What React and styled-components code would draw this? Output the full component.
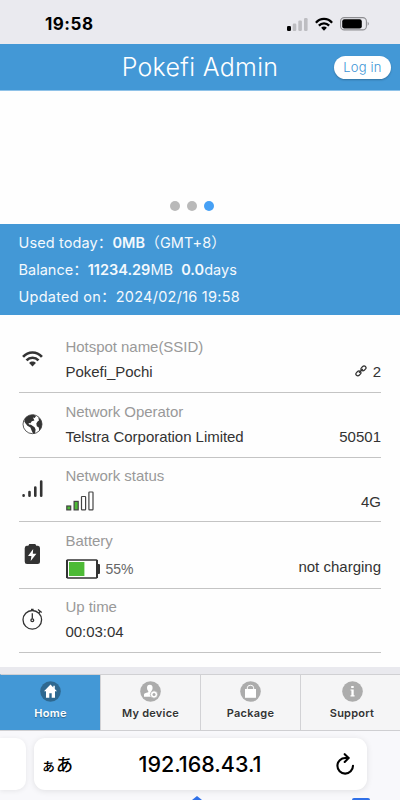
import styled, { createGlobalStyle } from "styled-components";

const GlobalStyle = createGlobalStyle`
    * {
        box-sizing: border-box;
    }
    body {
        margin: 0;
        background: #fff;
    }
`
const Phone = styled.div`
    width: 400px;
    height: 800px;
    overflow: hidden;
    display: flex;
    flex-direction: column;
    background: #fefefe;
    font-family: "Liberation Sans", "Noto Sans CJK JP", sans-serif;
`
const StatusBar = styled.div`
    height: 44px;
    flex-shrink: 0;
    display: flex;
    align-items: center;
    justify-content: space-between;
    padding: 4px 30px 0 45px;
    background: #eaeaef;
`
const Clock = styled.div`
    font: 700 17px/20px Inter, sans-serif;
    letter-spacing: 0.5px;
    color: #000;
`
const StatusIcons = styled.div`
    display: flex;
    align-items: center;
    gap: 7px;
`
const Header = styled.header`
    height: 47px;
    flex-shrink: 0;
    display: grid;
    grid-template-columns: 1fr auto 1fr;
    align-items: center;
    padding: 0 9px;
    background: #4398d6;
    border-bottom: 1px solid #8fc2e8;
`
const Title = styled.h1`
    grid-column: 2;
    margin: 0;
    font: 300 25px/30px Inter, sans-serif;
    letter-spacing: 0.3px;
    color: #fff;
`
const LoginButton = styled.button`
    justify-self: end;
    width: 57px;
    height: 23px;
    margin-top: 1px;
    padding: 0;
    border: 0;
    border-radius: 12px;
    background: #fff;
    box-shadow: 0 1px 2px rgba(0, 0, 0, .25);
    font: 300 13px/23px Inter, sans-serif;
    letter-spacing: 0.2px;
    color: #3c94d6;
`
const Banner = styled.div`
    height: 133px;
    flex-shrink: 0;
    display: flex;
    align-items: flex-end;
    justify-content: center;
    gap: 7px;
    padding: 0 15.5px 13px 0;
`
const Dot = styled.span`
    width: 10px;
    height: 10px;
    border-radius: 50%;
    background: ${({ $active }) => ($active ? "#46a0f5" : "#b9b9b9")};
`
const Usage = styled.section`
    height: 91px;
    flex-shrink: 0;
    padding: 4.5px 18.5px;
    background: #4398d6;
    color: #f4f9fd;
    font: 400 14.5px/27px Inter, "Noto Sans CJK SC", sans-serif;
`
const UsageLine = styled.div`
    height: 27px;
    white-space: pre;
    letter-spacing: ${({ $spacing }) => $spacing || "0"};

    b {
        font-weight: 600;
    }
`
const List = styled.ul`
    height: 352px;
    flex-shrink: 0;
    margin: 0;
    padding: 13px 19px 0;
    list-style: none;
`
const Row = styled.li`
    height: ${({ $height }) => $height}px;
    display: grid;
    grid-template-columns: 46.5px 1fr auto;
    border-bottom: 1px solid #c4c4c4;
`
const RowIcon = styled.div`
    padding-top: ${({ $top }) => $top}px;
    padding-left: 3px;

    svg {
        display: block;
    }
`
const RowText = styled.div`
    padding-top: ${({ $top }) => $top || 9}px;
    letter-spacing: -0.04px;
`
const Label = styled.div`
    font-size: 15px;
    line-height: 20px;
    color: #999;
`
const Value = styled.div`
    display: flex;
    align-items: center;
    gap: 6px;
    height: 20px;
    margin-top: ${({ $gap }) => $gap || 5}px;
    font-size: 15px;
    line-height: 20px;
    color: #333;
`
const Percent = styled.span`
    font-size: 14px;
    color: #666;
`
const RowEnd = styled.div`
    display: flex;
    align-items: center;
    align-self: end;
    gap: 6px;
    height: 20px;
    margin-bottom: ${({ $bottom }) => $bottom}px;
    font-size: 15px;
    color: #333;
`
const TabBar = styled.nav`
    height: 64px;
    flex-shrink: 0;
    display: grid;
    grid-template-columns: repeat(4, 1fr);
    border-top: 7px solid #e9e9ee;
    border-bottom: 1px solid #cfcfd2;
    background: #f5f5f6;
`
const Tab = styled.a`
    display: flex;
    flex-direction: column;
    align-items: center;
    padding-top: 6px;
    gap: 4px;
    border-top: 1px solid #d0d0d3;
    border-left: 1px solid ${({ $active }) => ($active ? "#4398d6" : "#d2d2d5")};
    background: ${({ $active }) => ($active ? "#4398d6" : "transparent")};
    color: ${({ $active }) => ($active ? "#fff" : "#333")};
    text-shadow: ${({ $active }) => ($active ? "0 1px 1px rgba(0, 0, 0, .35)" : "0 1px 0 #fff")};
    font: 600 11px/14px Inter, sans-serif;
    letter-spacing: 0.25px;

    &:last-child {
        padding-left: 3px;
    }
`
const Browser = styled.div`
    height: 69px;
    flex-shrink: 0;
    display: grid;
    grid-template-columns: 26px 333px 1fr;
    grid-template-rows: 52px 1fr;
    column-gap: 8px;
    padding-top: 7px;
    background: #f8f8fb;
`
const PreviousPage = styled.div`
    border-radius: 0 10px 10px 0;
    background: #fff;
    box-shadow: 0 1px 5px rgba(0, 0, 0, .08);
`
const Address = styled.div`
    display: grid;
    grid-template-columns: 60px 1fr 60px;
    align-items: center;
    border-radius: 11px;
    background: #fff;
    box-shadow: 0 1px 6px rgba(0, 0, 0, .1);
    color: #000;
`
const Kana = styled.div`
    padding-left: 7px;
    font: 500 17px/24px "Noto Sans CJK JP", sans-serif;
    white-space: nowrap;

    small {
        font-size: 15px;
    }
`
const Url = styled.div`
    text-align: center;
    font: 500 21.5px/26px Inter, sans-serif;
    padding-right: 1px;
`
const Reload = styled.div`
    justify-self: end;
    padding-right: 12.5px;

    svg {
        display: block;
    }
`
const Toolbar = styled.div`
    grid-column: 1 / -1;
    display: flex;
    justify-content: flex-end;
    align-items: flex-end;
    gap: 150px;
    padding-right: 30px;

    svg {
        display: block;
    }
`

const CellularIcon = () => (
    <svg width="21" height="14" viewBox="0 0 21 14">
        <rect x="0" y="9" width="4" height="5" rx="1.3" fill="#000" />
        <rect x="5.7" y="6.5" width="3.6" height="7.5" rx="1.2" fill="#bdbdc1" />
        <rect x="11.3" y="3.5" width="3.6" height="10.5" rx="1.2" fill="#bdbdc1" />
        <rect x="17" y="1" width="3.6" height="13" rx="1.2" fill="#bdbdc1" />
    </svg>
)

const WifiIcon = ({ width, height, color }) => (
    <svg width={width} height={height} viewBox="0 0 20 15" fill="none" stroke={color} strokeWidth="2.5">
        <path d="M1 6C6 .4 14 .4 19 6" />
        <path d="M4.3 9.3C7.5 5.9 12.5 5.9 15.7 9.3" />
        <path d="M6.8 11.7C8.5 9.8 11.5 9.8 13.2 11.7L10 15Z" fill={color} stroke="none" />
    </svg>
)

const PhoneBattery = () => (
    <svg width="30" height="14" viewBox="0 0 30 14">
        <rect x=".6" y=".6" width="25.8" height="12.3" rx="3.7" fill="none" stroke="#8d8d91" strokeWidth="1.1" />
        <rect x="2.2" y="2.2" width="19.6" height="9.2" rx="2.2" fill="#000" />
        <path d="M27.7 4.8Q30 6.8 27.7 8.8Z" fill="#8d8d91" />
    </svg>
)

const GlobeIcon = () => (
    <svg width="21" height="21" viewBox="0 0 21 21">
        <circle cx="10.5" cy="10.2" r="9.5" fill="#fff" stroke="#333" strokeWidth=".8" />
        <path d="M3 4.5Q6.5 .4 12 .8L14 2.2L12.6 4L11 3.6L12.4 6.4L9.8 7.3L8.4 9.3L6.6 9L7 10.6L9 10.8L12.6 13.2L13.6 15.6L13 19.4L11 19.4L9.6 16.4L8.4 13.6L5.4 11.8L3.4 9.2L2.2 7.2Z" fill="#333" />
        <path d="M16.2 3.2Q20 6 20 10.5Q19.8 14.4 17.2 16.8L16.8 13.6L14.8 12.2L14.3 9.4L15.8 7.2L17 6.4Z" fill="#333" />
    </svg>
)

const SignalIcon = () => (
    <svg width="21" height="18" viewBox="0 0 21 18" stroke="#333" strokeWidth="2.6" strokeLinecap="round">
        <path d="M1.6 15.3V15.8M7.5 12V15.8M13.3 7.5V15.8M19.2 1.6V15.8" />
    </svg>
)

const ChargeIcon = () => (
    <svg width="20" height="20" viewBox="0 0 20 20">
        <path d="M7.3 0H13.3L14.3 1.8H16Q18 2.2 18 4.2V17.5Q18 20 15.5 20H5Q2.7 20 2.7 17.5V4.2Q2.7 2.2 4.6 1.8H6.3Z" fill="#333" />
        <path d="M11.2 5L6 12H9.4L8.7 17L14.4 9.8H10.8Z" fill="#fff" />
    </svg>
)

const TimerIcon = () => (
    <svg width="21" height="22" viewBox="0 0 21 22" fill="none" stroke="#333" strokeWidth="1.3">
        <circle cx="10.3" cy="11.8" r="9.3" />
        <circle cx="10.3" cy="12.3" r="1.4" />
        <path d="M10.3 5.2V10.8M9 1.3H11.6M16 1.5L19.7 4.6M18.3 3.2L16.8 5" />
    </svg>
)

const LinkIcon = () => (
    <svg width="12" height="12" viewBox="0 0 12 12" fill="none" stroke="#333" strokeWidth="1.25">
        <rect x="-2.7" y="-1.9" width="5.4" height="3.8" rx="1.9" transform="translate(3.4 8.4) rotate(-45)" />
        <rect x="-2.7" y="-1.9" width="5.4" height="3.8" rx="1.9" transform="translate(8.5 3.4) rotate(-45)" />
        <path d="M4 7.8L7.8 4" />
    </svg>
)

const StrengthBars = () => (
    <svg width="28" height="20" viewBox="0 0 28 20" fill="#fff" stroke="#444" strokeWidth="1.2">
        <rect x=".8" y="15" width="3.9" height="3.9" fill="#4dba36" />
        <rect x="8.1" y="10.4" width="4.1" height="8.5" fill="#4dba36" />
        <rect x="15.5" y="5.5" width="4.1" height="13.4" rx=".6" />
        <rect x="22.9" y="1" width="4.1" height="17.9" rx=".6" />
    </svg>
)

const BatteryLevel = ({ percent }) => (
    <svg width="34" height="20" viewBox="0 0 34 20">
        <rect x="1" y="1" width="30" height="18" rx=".8" fill="#fff" stroke="#333" strokeWidth="1.3" />
        <path d="M1 1V19M31 1V19" stroke="#333" strokeWidth="2" />
        <path d="M31 5H33Q34 5 34 6V14Q34 15 33 15H31Z" fill="#333" />
        <rect x="3" y="3" width={percent * 0.28} height="14" fill="#4dba36" />
    </svg>
)

const TabIcon = ({ name }) => (
    <svg width="21" height="21" viewBox="0 0 21 21">
        <circle cx="10.5" cy="10.5" r="10.3" fill={name === "home" ? "#2e6890" : "#acacac"} />
        {name === "home" && (
            <path d="M10.5 3.6L4 10.2H6V16.7H9.3V12.2H11.7V16.7H15V10.2H17L14.8 8V4.8H13.3V6.5Z" fill="#fff" />
        )}
        {name === "device" && (
            <g fill="#fff">
                <path d="M7 7Q7 3.7 9.8 3.7Q12.6 3.7 12.6 7Q12.6 9 11.3 10.2V11.2L13.7 12V15.8H4V13.4Q4 12.2 8.3 11.2V10.2Q7 9 7 7Z" />
                <circle cx="14" cy="13.5" r="3.7" stroke="#acacac" strokeWidth=".8" />
                <circle cx="14" cy="13.5" r="1.5" fill="#acacac" />
            </g>
        )}
        {name === "package" && (
            <g>
                <path d="M5 8H16V16.8H5Z" fill="#fff" />
                <path d="M7.3 9V6.8Q7.3 4.3 10.5 4.3Q13.7 4.3 13.7 6.8V9" fill="none" stroke="#fff" strokeWidth="1" />
            </g>
        )}
        {name === "support" && (
            <path d="M9.2 5H11.7V7H9.2ZM8.5 8.4H11.7V14.3H12.6V15.5H8.5V14.3H9.4V9.6H8.5Z" fill="#fff" />
        )}
    </svg>
)

const ReloadIcon = () => (
    <svg width="20" height="23" viewBox="0 0 20 23" fill="none" stroke="#000" strokeWidth="2.1" strokeLinecap="round" strokeLinejoin="round">
        <path d="M13.4 5H10.4A7.8 7.8 0 1 0 18 12.8" />
        <path d="M9.7 1.2L13.6 5L9.7 8.9" />
    </svg>
)

const tabs = [
    { name: "home", title: "Home" },
    { name: "device", title: "My device" },
    { name: "package", title: "Package" },
    { name: "support", title: "Support" },
]

const App = () => {
    return (
        <Phone>
            <GlobalStyle />
            <StatusBar>
                <Clock>19:58</Clock>
                <StatusIcons>
                    <CellularIcon />
                    <WifiIcon width={18} height={14} color="#000" />
                    <PhoneBattery />
                </StatusIcons>
            </StatusBar>
            <Header>
                <Title>Pokefi Admin</Title>
                <LoginButton>Log in</LoginButton>
            </Header>
            <Banner>
                <Dot />
                <Dot />
                <Dot $active />
            </Banner>
            <Usage>
                <UsageLine $spacing="0.12px">Used today：<b>0MB</b>（GMT+8）</UsageLine>
                <UsageLine $spacing="0.01px">Balance：<b>11234.29</b>MB  <b>0.0</b>days</UsageLine>
                <UsageLine $spacing="0.25px">Updated on：2024/02/16 19:58</UsageLine>
            </Usage>
            <List>
                <Row $height={65}>
                    <RowIcon $top={22}><WifiIcon width={21} height={17} color="#333" /></RowIcon>
                    <RowText>
                        <Label>Hotspot name(SSID)</Label>
                        <Value>Pokefi_Pochi</Value>
                    </RowText>
                    <RowEnd $bottom={11}><LinkIcon /><span>2</span></RowEnd>
                </Row>
                <Row $height={65}>
                    <RowIcon $top={21}><GlobeIcon /></RowIcon>
                    <RowText>
                        <Label>Network Operator</Label>
                        <Value>Telstra Corporation Limited</Value>
                    </RowText>
                    <RowEnd $bottom={11}>50501</RowEnd>
                </Row>
                <Row $height={64}>
                    <RowIcon $top={22}><SignalIcon /></RowIcon>
                    <RowText $top={8}>
                        <Label>Network status</Label>
                        <Value><StrengthBars /></Value>
                    </RowText>
                    <RowEnd $bottom={10}>4G</RowEnd>
                </Row>
                <Row $height={67}>
                    <RowIcon $top={22}><ChargeIcon /></RowIcon>
                    <RowText>
                        <Label>Battery</Label>
                        <Value $gap={8}>
                            <BatteryLevel percent={55} />
                            <Percent>55%</Percent>
                        </Value>
                    </RowText>
                    <RowEnd $bottom={12}>not charging</RowEnd>
                </Row>
                <Row $height={64}>
                    <RowIcon $top={19}><TimerIcon /></RowIcon>
                    <RowText $top={8}>
                        <Label>Up time</Label>
                        <Value>00:03:04</Value>
                    </RowText>
                </Row>
            </List>
            <TabBar>
                {tabs.map((tab) => (
                    <Tab key={tab.name} $active={tab.name === "home"}>
                        <TabIcon name={tab.name} />
                        {tab.title}
                    </Tab>
                ))}
            </TabBar>
            <Browser>
                <PreviousPage />
                <Address>
                    <Kana><small>ぁ</small>あ</Kana>
                    <Url>192.168.43.1</Url>
                    <Reload><ReloadIcon /></Reload>
                </Address>
                <div />
                <Toolbar>
                    <svg width="10" height="4" viewBox="0 0 10 4"><path d="M0 4L5 0L10 4Z" fill="#2f70e8" /></svg>
                    <svg width="18" height="2" viewBox="0 0 18 2"><rect width="18" height="4" rx="2" fill="#2f70e8" /></svg>
                </Toolbar>
            </Browser>
        </Phone>
    );
};

export default App;
